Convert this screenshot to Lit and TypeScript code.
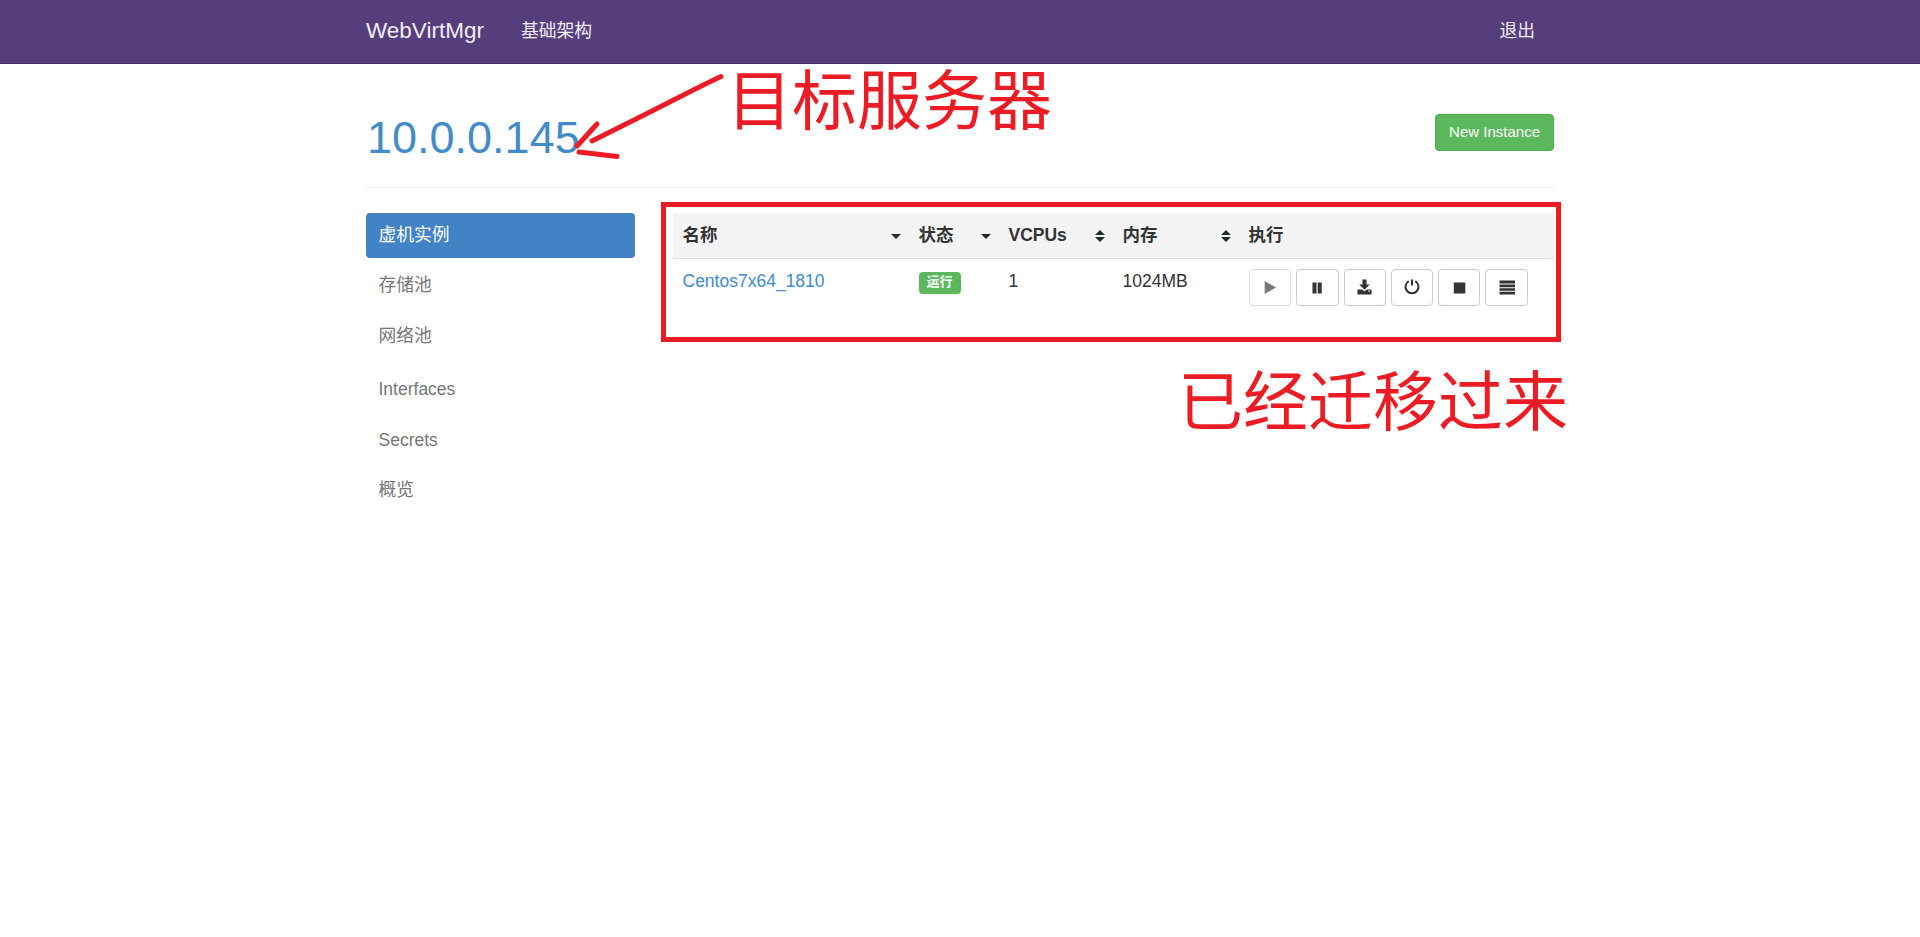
import { LitElement, html, css, svg } from "lit";
import { customElement } from "lit/decorators.js";
import { classMap } from "lit/directives/class-map.js";

const NAV = ["虚机实例", "存储池", "网络池", "Interfaces", "Secrets", "概览"];

const COLUMNS = [
  { label: "名称", sort: "down" },
  { label: "状态", sort: "down" },
  { label: "VCPUs", sort: "both" },
  { label: "内存", sort: "both" },
  { label: "执行", sort: "" },
];

const ICONS = [
  { name: "启动", off: true, shape: svg`<path d="M3.700 2 15 8.500 3.700 15z"/>` },
  { name: "暂停", off: false, shape: svg`<path d="M4.500 3.500h4v11h-4zM9.700 3.500h4v11h-4z"/>` },
  {
    name: "保存",
    off: false,
    shape: svg`<path d="M6.500 .5h4v5h3.300L8.500 10.800 3.200 5.500h3.300zM1.500 10.500h4.700L8.500 12.300l2.300-1.800H15.500v5H1.500zM12 11.500v1h2v-1z" fill-rule="evenodd"/>`,
  },
  {
    name: "关机",
    off: false,
    shape: svg`<path d="M5.700 2.200A6.500 6.500 0 1 0 12.300 2.200M9 .5V6.500" fill="none" stroke="currentColor" stroke-width="2"/>`,
  },
  { name: "强制关机", off: false, shape: svg`<path d="M3.800 3.500h11.500v11h-11.500z"/>` },
  {
    name: "控制台",
    off: false,
    shape: svg`<path d="M1.500 1.500h15.500v3h-15.500zM1.500 5.500h15.500v2.700h-15.500zM1.500 9.200h15.500v2.600h-15.500zM1.500 12.700h15.500v2.800h-15.500z"/>`,
  },
];

@customElement("app-root")
export class AppRoot extends LitElement {
  static styles = css`
    :host {
      display: block;
      position: relative;
      min-height: 937px;
      background: #fff;
      color: #333;
      font: 17.5px/25px "Liberation Sans", "Noto Sans CJK SC", sans-serif;
      overflow: hidden;
    }
    * { box-sizing: border-box; }
    a { color: #428bca; text-decoration: none; }
    .navbar {
      height: 64px;
      background: #563d7c;
      border-bottom: 1px solid #463265;
    }
    .container { width: 1188px; margin: 0 auto; }
    .bar {
      display: flex;
      align-items: center;
      height: 62px;
      padding-right: 19px;
    }
    .bar a { color: #f3eefa; font-size: 17.800px; }
    .bar .brand { font-size: 22.500px; margin-right: 37px; padding-bottom: 2px; }
    .logout { margin-left: auto; }
    .heading {
      display: flex;
      justify-content: space-between;
      align-items: flex-start;
      height: 124px;
      padding-top: 50px;
      border-bottom: 1px solid #eee;
    }
    h1 { margin: -1px 0 0 1px; font-size: 45px; line-height: 50px; font-weight: 400; }
    .create {
      height: 37px;
      padding: 0 13px 2px;
      color: #fff;
      background: #5cb85c;
      border: 1px solid #4cae4c;
      border-radius: 4px;
      font: 15px/33px "Liberation Sans", sans-serif;
    }
    .layout {
      display: grid;
      grid-template-columns: 269px 881px;
      justify-content: space-between;
      padding-top: 25px;
    }
    .side { display: flex; flex-direction: column; gap: 6.200px; }
    .side a {
      height: 45px;
      padding: 0 12.500px;
      font-size: 17.800px;
      line-height: 43.500px;
      border-radius: 4px;
      color: #777;
    }
    .side a.latin { font-size: 17.500px; line-height: 44.500px; }
    .side a.active { color: #fff; background: #4283c6; line-height: 44px; }
    .row {
      display: grid;
      grid-template-columns: 236px 90px 114px 126px 315px;
    }
    .head {
      height: 46px;
      background: #f4f4f4;
      border-bottom: 1px solid #ddd;
      font-weight: 700;
    }
    .th {
      display: flex;
      justify-content: space-between;
      align-items: center;
      padding: 0 8px 0 9.500px;
    }
    .sort { width: 10px; height: 12px; fill: #222b2b; overflow: visible; }
    .td { padding: 10px 0 0 9.500px; }
    .badge {
      display: inline-block;
      height: 22px;
      width: 42px;
      margin-top: 3px;
      border-radius: 4px;
      background: #5cb85c;
      color: #fff;
      text-align: center;
      font-size: 13px;
      line-height: 20px;
      font-weight: 700;
      vertical-align: top;
    }
    .actions { display: flex; gap: 5px; padding: 10px 0 0 10px; }
    .actions button {
      display: flex;
      align-items: center;
      justify-content: center;
      width: 42.300px;
      height: 37px;
      padding: 0;
      border: 1px solid #ccc;
      border-radius: 4px;
      background: #fff;
      color: #333;
    }
    .actions button.off { opacity: 0.65; }
    .actions svg { width: 18px; height: 18px; fill: currentColor; }
    .frame {
      position: absolute;
      left: 661px;
      top: 202px;
      width: 900px;
      height: 140px;
      border: 5px solid #ed1c24;
      pointer-events: none;
    }
    .note {
      position: absolute;
      color: #ed1c24;
      font: 65px/80px "Noto Sans CJK SC", sans-serif;
      white-space: nowrap;
    }
    .target { left: 727px; top: 56px; }
    .moved { left: 1178px; top: 357px; }
    .arrow {
      position: absolute;
      left: 570px;
      top: 70px;
      width: 160px;
      height: 95px;
      fill: none;
      stroke: #ed1c24;
      stroke-width: 5;
      stroke-linecap: round;
    }
  `;

  private sortIcon(kind: string) {
    if (!kind) return "";
    return html`<svg class="sort" viewBox="0 0 10 12">
      ${kind === "both"
        ? svg`<path d="M0 5 5 0l5 5zM0 7h10l-5 5z"/>`
        : svg`<path d="M0 4h10L5 9z"/>`}
    </svg>`;
  }

  render() {
    return html`
      <header class="navbar">
        <div class="container bar">
          <a class="brand">WebVirtMgr</a>
          <a>基础架构</a>
          <a class="logout">退出</a>
        </div>
      </header>
      <main class="container">
        <div class="heading">
          <h1><a>10.0.0.145</a></h1>
          <button class="create">New Instance</button>
        </div>
        <div class="layout">
          <nav class="side">
            ${NAV.map(
              (t, i) => html`<a class=${classMap({ active: i === 0, latin: /^[A-Z]/.test(t) })}>${t}</a>`
            )}
          </nav>
          <section>
            <div class="row head">
              ${COLUMNS.map((c) => html`<div class="th"><span>${c.label}</span>${this.sortIcon(c.sort)}</div>`)}
            </div>
            <div class="row">
              <div class="td"><a>Centos7x64_1810</a></div>
              <div class="td"><span class="badge">运行</span></div>
              <div class="td">1</div>
              <div class="td">1024MB</div>
              <div class="actions">
                ${ICONS.map(
                  (b) => html`<button class=${classMap({ off: b.off })} aria-label=${b.name}>
                    <svg viewBox="0 0 18 18">${b.shape}</svg>
                  </button>`
                )}
              </div>
            </div>
          </section>
        </div>
      </main>
      <div class="frame"></div>
      <svg class="arrow" viewBox="570 70 160 95">
        <path d="M721 76.500C690 91 665 105 636 119L592 141M597 124 577 146M579 152 617 156.500" />
      </svg>
      <div class="note target">目标服务器</div>
      <div class="note moved">已经迁移过来</div>
    `;
  }
}
